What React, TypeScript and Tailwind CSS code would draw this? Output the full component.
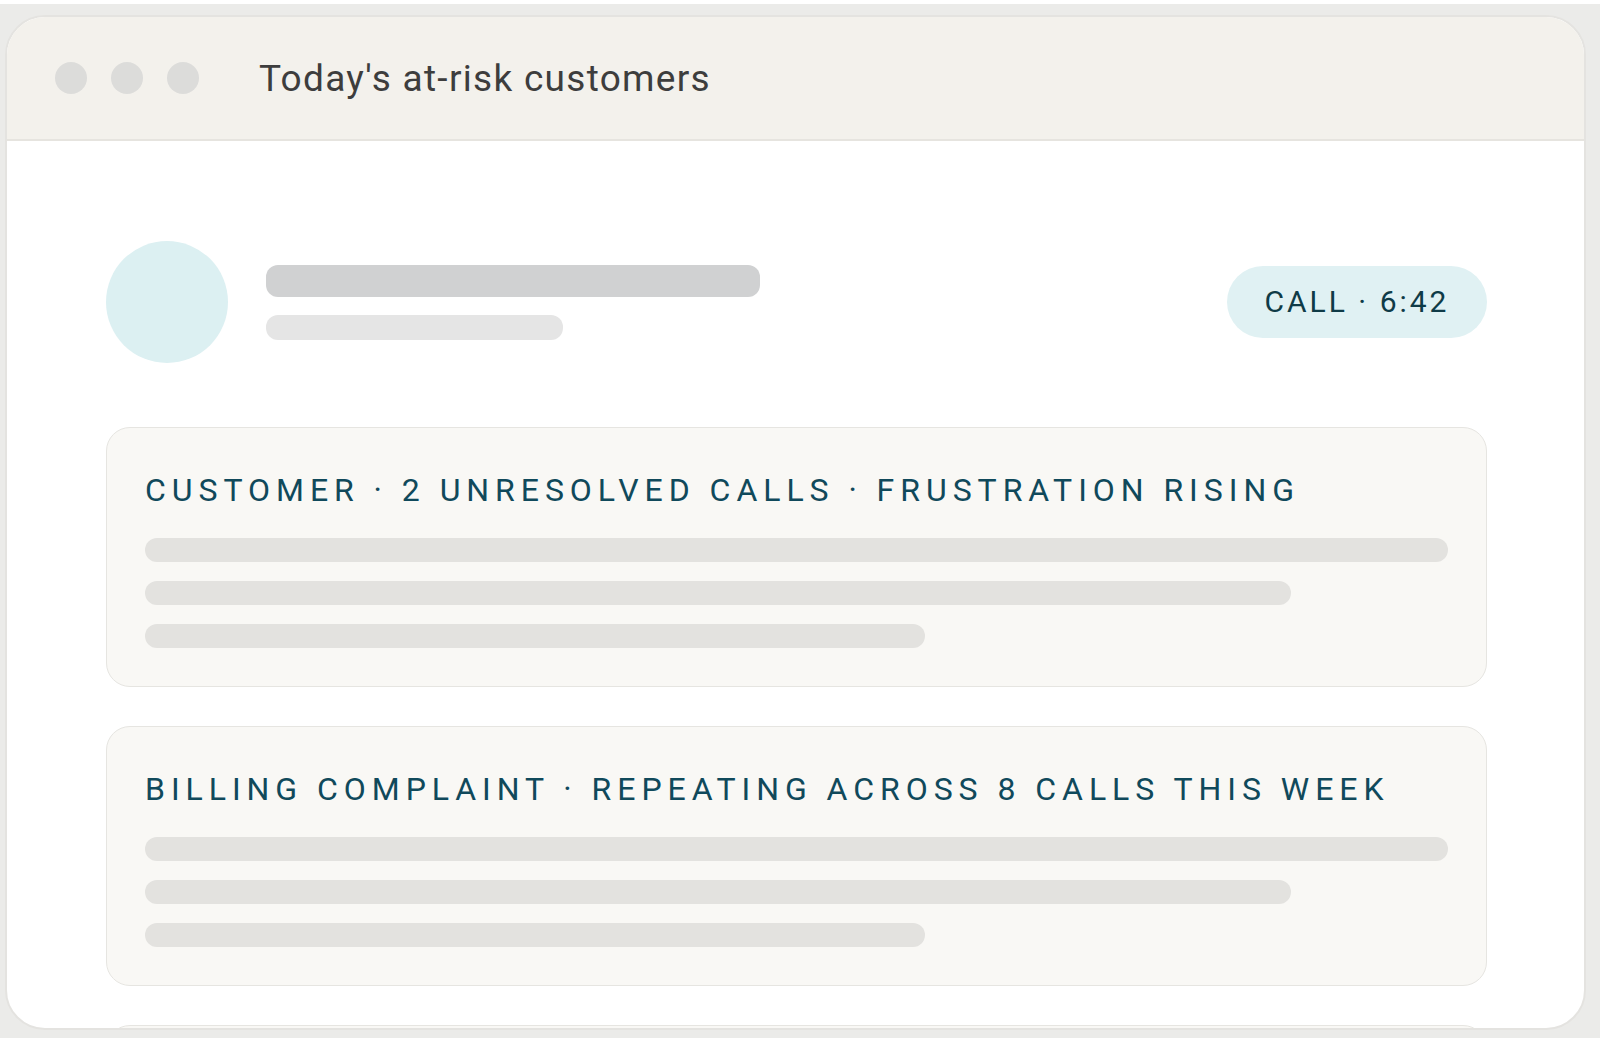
import React from 'react';

const font = { fontFamily: 'Roboto, "Open Sans", Arial, sans-serif' };

type Alert = { id: number; label?: string };

const alerts: Alert[] = [
	{ id: 1, label: 'Customer · 2 unresolved calls · frustration rising' },
	{ id: 2, label: 'Billing complaint · repeating across 8 calls this week' },
	{ id: 3 },
];

function AlertCard({ label }: { label?: string }) {
	return (
		<div className="shrink-0 rounded-[24px] border-[1.5px] border-[#e6e5e1] bg-[#f9f8f5] px-[38px] pt-[46px] pb-[38px]">
			<div className="h-[32px] text-[32px] leading-none uppercase tracking-[0.186em] text-[#10495b] whitespace-nowrap">
				{label}
			</div>
			<div className="mt-[32px] flex flex-col gap-[19px]">
				<div className="h-[24px] w-full rounded-full bg-[#e3e2df]" />
				<div className="h-[24px] w-[1146px] rounded-full bg-[#e3e2df]" />
				<div className="h-[24px] w-[780px] rounded-full bg-[#e3e2df]" />
			</div>
		</div>
	);
}

export default function App() {
	return (
		<div className="min-h-screen bg-white pt-[4px]" style={font}>
			<div className="h-[1034px] bg-[#ebebe9] pl-[5px] pr-[14px] pt-[11px] pb-[8px]">
				<div className="h-full flex flex-col overflow-hidden rounded-[40px] border-2 border-[#e4e3e0] bg-white">
					{/* Title bar */}
					<div className="h-[124px] shrink-0 flex items-center border-b-2 border-[#e6e4df] bg-[#f3f1ec] pl-[48px]">
						<div className="flex items-center gap-[24px]">
							<span className="h-[32px] w-[32px] rounded-full bg-[#dcdcda]" />
							<span className="h-[32px] w-[32px] rounded-full bg-[#dcdcda]" />
							<span className="h-[32px] w-[32px] rounded-full bg-[#dcdcda]" />
						</div>
						<div className="ml-[60px] text-[37px] leading-none tracking-[0.035em] text-[#3d3d3d]">
							Today's at-risk customers
						</div>
					</div>

					{/* Body */}
					<div className="flex flex-col pl-[99px] pr-[97px] pt-[100px]">
						<div className="flex items-center">
							<div className="h-[122px] w-[122px] shrink-0 rounded-full bg-[#dcf0f2]" />
							<div className="ml-[38px] flex flex-col gap-[18px]">
								<div className="h-[32px] w-[494px] rounded-[12px] bg-[#d0d1d2]" />
								<div className="h-[25px] w-[297px] rounded-[12px] bg-[#e5e5e5]" />
							</div>
							<div className="ml-auto flex h-[72px] w-[260px] items-center justify-center rounded-full bg-[#e0f1f3] text-[30px] leading-none tracking-[0.1em] text-[#0f3b47]">
								CALL · 6:42
							</div>
						</div>

						<div className="mt-[64px] flex flex-col gap-[39px]">
							{alerts.map((a) => (
								<AlertCard key={a.id} label={a.label} />
							))}
						</div>
					</div>
				</div>
			</div>
		</div>
	);
}
